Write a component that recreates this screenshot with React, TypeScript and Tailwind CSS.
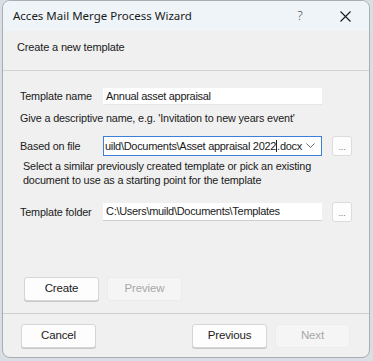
import React from "react";

const font = { fontFamily: '"Liberation Sans", Arial, sans-serif', letterSpacing: "-0.15px" };

function Btn({ children, disabled, w = "w-[75px]" }: { children: React.ReactNode; disabled?: boolean; w?: string }) {
  return (
    <div
      className={`${w} h-[24px] flex items-center justify-center rounded-[3px] text-[11.5px] ${
        disabled
          ? "bg-[#f5f5f5] border border-[#ececec] text-[#a8a8a8]"
          : "bg-[#fdfdfd] border border-[#d6d6d6] text-[#1b1b1b] shadow-[0_1px_0_#c8c8c8]"
      }`}
    >
      {children}
    </div>
  );
}

function Ellipsis() {
  return (
    <div className="w-[20px] h-[20px] rounded-[3px] bg-[#fdfdfd] border border-[#dcdcdc] flex items-end justify-center pb-[3px] text-[9px] text-[#777] leading-none">
      ...
    </div>
  );
}

const inputText = { letterSpacing: "-0.3px" };

export default function App() {
  return (
    <div className="w-[373px] h-[361px] bg-[#d9dee4] overflow-hidden" style={font}>
      <div className="ml-[2px] w-[368px] h-[358px] rounded-[8px] border border-[#a9adb2] bg-[#f0f0f0] overflow-hidden flex flex-col">
        {/* title bar */}
        <div className="h-[30px] bg-[#eef4f8] flex items-center shrink-0">
          <div
            className="pl-[10px] flex-1 text-[11.5px] text-[#1a1a1a]"
            style={{ fontFamily: '"Noto Sans", "Open Sans", sans-serif', letterSpacing: "0px" }}
          >
            Acces Mail Merge Process Wizard
          </div>
          <div
            className="w-[46px] h-full flex items-center justify-center text-[13px] text-[#444] font-light"
            style={{ fontFamily: '"Noto Sans", sans-serif' }}
          >
            ?
          </div>
          <div className="w-[46px] h-full flex items-center justify-center pr-[2px]">
            <svg width="11" height="11" viewBox="0 0 11 11">
              <path d="M0.5 0.5 L10.5 10.5 M10.5 0.5 L0.5 10.5" stroke="#1a1a1a" strokeWidth="1.1" />
            </svg>
          </div>
        </div>
        {/* header */}
        <div className="h-[40px] border-b border-[#d2d2d2] pt-[8px] pl-[14px] text-[11px] text-[#1a1a1a] shrink-0">
          Create a new template
        </div>
        {/* body */}
        <div className="flex-1 pl-[17px] text-[10.8px] text-[#1a1a1a]">
          <div className="mt-[17px] flex items-center h-[17px]">
            <div className="w-[83px]">Template name</div>
            <div
              className="w-[219px] h-[17px] bg-white border-b border-[#e6e6e6] flex items-center pl-[3px] text-[11px]"
              style={inputText}
            >
              Annual asset appraisal
            </div>
          </div>
          <div className="mt-[6px] leading-[14px]">Give a descriptive name, e.g. 'Invitation to new years event'</div>
          <div className="mt-[11px] flex items-center h-[20px]">
            <div className="w-[83px]">Based on file</div>
            <div
              className="w-[219px] h-[20px] bg-white border border-[#3b7fd6] flex items-center pl-[1px] text-[11px] overflow-hidden"
              style={inputText}
            >
              <span className="whitespace-nowrap flex-1 overflow-hidden">
                uild\Documents\Asset appraisal 2022<span className="border-l border-[#222]">.</span>docx
              </span>
              <svg width="9" height="6" viewBox="0 0 9 6" className="mr-[6px] ml-[2px] shrink-0">
                <path d="M0.5 0.5 L4.5 4.5 L8.5 0.5" stroke="#666" strokeWidth="1" fill="none" />
              </svg>
            </div>
            <div className="ml-[10px]">
              <Ellipsis />
            </div>
          </div>
          <div className="mt-[3px] leading-[14px] pl-[3px]">
            Select a similar previously created template or pick an existing
            <br />
            document to use as a starting point for the template
          </div>
          <div className="mt-[15px] flex items-center h-[20px]">
            <div className="w-[83px]">Template folder</div>
            <div
              className="w-[219px] h-[18px] bg-white border-b border-[#cfcfcf] flex items-center pl-[3px] text-[11px]"
              style={inputText}
            >
              C:\Users\muild\Documents\Templates
            </div>
            <div className="ml-[10px]">
              <Ellipsis />
            </div>
          </div>
          <div className="mt-[55px] flex gap-[8px] pl-[4px]">
            <Btn>Create</Btn>
            <Btn disabled>Preview</Btn>
          </div>
        </div>
        {/* footer */}
        <div className="h-[44px] border-t border-[#cfcfcf] flex items-center pl-[18px] pr-[19px] shrink-0 text-[#1b1b1b]">
          <Btn>Cancel</Btn>
          <div className="flex-1" />
          <Btn>Previous</Btn>
          <div className="w-[8px]" />
          <Btn disabled>Next</Btn>
        </div>
      </div>
    </div>
  );
}
